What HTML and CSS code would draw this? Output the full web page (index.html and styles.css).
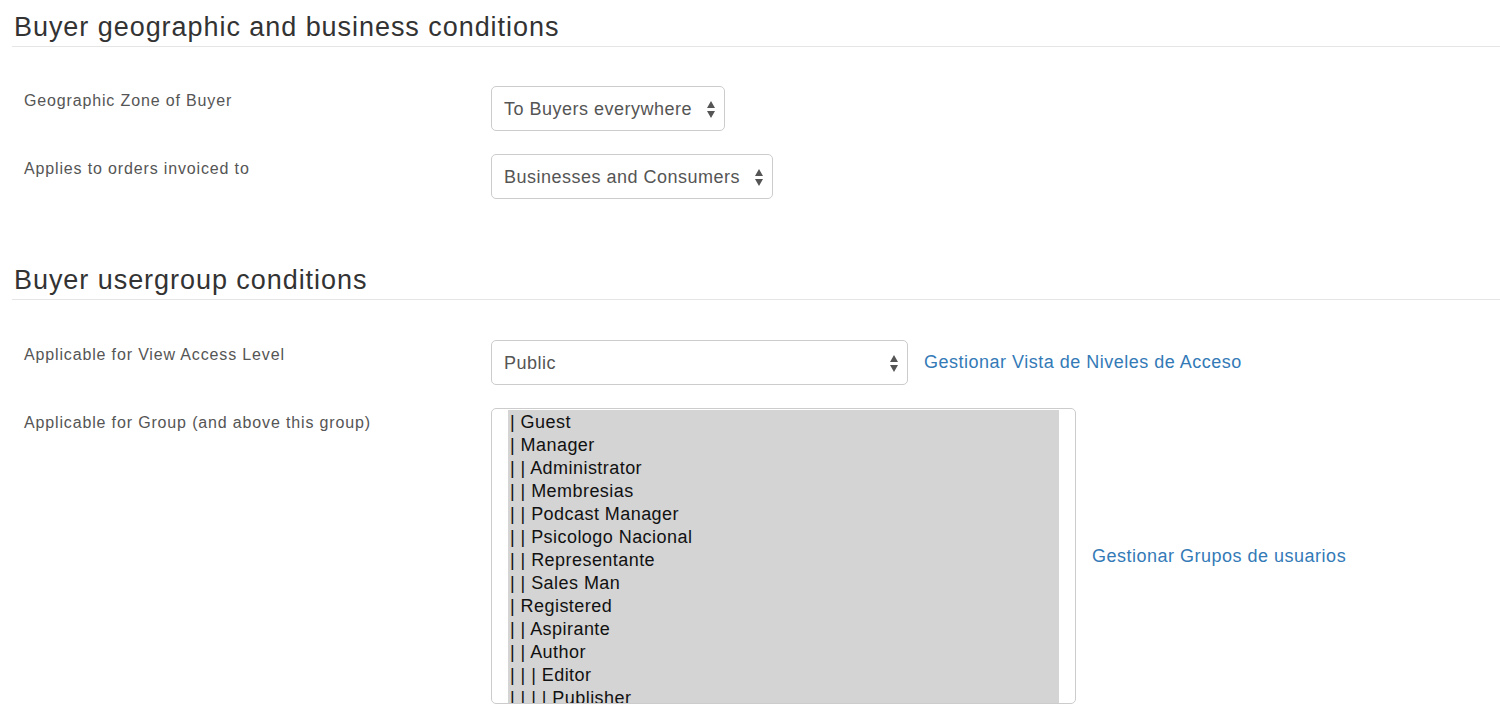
FILE: index.html
```html
<!DOCTYPE html>
<html>
<head>
<meta charset="utf-8">
<link rel="stylesheet" href="styles.css">
</head>
<body>
<div class="page">
  <section class="section">
    <h2 class="section-title">Buyer geographic and business conditions</h2>
    <div class="rows">
      <div class="row">
        <div class="label">Geographic Zone of Buyer</div>
        <div class="control">
          <div class="select w-zone"><span class="select-text">To Buyers everywhere</span>
            <svg class="arrows" width="8" height="17" viewBox="0 0 8 17"><path d="M4 0 L8 7 L0 7 Z M0 10 L8 10 L4 17 Z" fill="#555"/></svg>
          </div>
        </div>
      </div>
      <div class="row">
        <div class="label">Applies to orders invoiced to</div>
        <div class="control">
          <div class="select w-inv"><span class="select-text">Businesses and Consumers</span>
            <svg class="arrows" width="8" height="17" viewBox="0 0 8 17"><path d="M4 0 L8 7 L0 7 Z M0 10 L8 10 L4 17 Z" fill="#555"/></svg>
          </div>
        </div>
      </div>
    </div>
  </section>
  <section class="section second">
    <h2 class="section-title">Buyer usergroup conditions</h2>
    <div class="rows">
      <div class="row">
        <div class="label">Applicable for View Access Level</div>
        <div class="control">
          <div class="select w-access"><span class="select-text">Public</span>
            <svg class="arrows" width="8" height="17" viewBox="0 0 8 17"><path d="M4 0 L8 7 L0 7 Z M0 10 L8 10 L4 17 Z" fill="#555"/></svg>
          </div>
          <a class="link" href="#">Gestionar Vista de Niveles de Acceso</a>
        </div>
      </div>
      <div class="row">
        <div class="label">Applicable for Group (and above this group)</div>
        <div class="control center">
          <div class="multi">
            <div class="options">
              <div class="opt">| Guest</div>
              <div class="opt">| Manager</div>
              <div class="opt">| | Administrator</div>
              <div class="opt">| | Membresias</div>
              <div class="opt">| | Podcast Manager</div>
              <div class="opt">| | Psicologo Nacional</div>
              <div class="opt">| | Representante</div>
              <div class="opt">| | Sales Man</div>
              <div class="opt">| Registered</div>
              <div class="opt">| | Aspirante</div>
              <div class="opt">| | Author</div>
              <div class="opt">| | | Editor</div>
              <div class="opt">| | | | Publisher</div>
            </div>
          </div>
          <a class="link" href="#">Gestionar Grupos de usuarios</a>
        </div>
      </div>
    </div>
  </section>
</div>
</body>
</html>
```

FILE: styles.css
```css
* { box-sizing: border-box; }
html, body { margin: 0; padding: 0; background: #fff; }
body {
  font-family: "Liberation Sans", Arial, Helvetica, sans-serif;
  color: #555;
  width: 1500px;
  height: 715px;
  overflow: hidden;
}
.page { padding: 13px 0 0 12px; }
.section-title {
  margin: 0;
  padding: 0 0 4px 2px;
  font-size: 27px;
  line-height: 29px;
  letter-spacing: 0.95px;
  font-weight: normal;
  color: #333;
  border-bottom: 1px solid #e5e5e5;
}
.second { margin-top: 67px; }
.rows {
  display: flex;
  flex-direction: column;
  gap: 23px;
  padding: 39px 0 0 12px;
}
.second .rows { padding-top: 40px; }
.row {
  display: grid;
  grid-template-columns: 467px 1fr;
  align-items: start;
}
.label {
  font-size: 16px;
  line-height: 20px;
  letter-spacing: 0.85px;
  padding-top: 5px;
  color: #555;
}
.control {
  display: flex;
  align-items: center;
  gap: 16px;
}
.select {
  height: 45px;
  border: 1px solid #ccc;
  border-radius: 5px;
  display: flex;
  align-items: center;
  padding: 1px 9px 0 12px;
  font-size: 18px;
  letter-spacing: 0.5px;
  color: #555;
  background: #fff;
}
.select-text { flex: 1; white-space: nowrap; }
.arrows { flex: none; margin-left: 8px; }
.w-zone { width: 234px; }
.w-inv { width: 282px; }
.w-access { width: 417px; }
.link {
  font-size: 18px;
  letter-spacing: 0.5px;
  color: #337ab7;
  text-decoration: none;
}
.multi {
  width: 585px;
  height: 296px;
  border: 1px solid #ccc;
  border-radius: 5px;
  padding: 1px 16px 0 16px;
  overflow: hidden;
  background: #fff;
}
.options {
  background: #d4d4d4;
  height: 100%;
  padding-top: 1px;
  overflow: hidden;
}
.opt {
  font-size: 18px;
  line-height: 23px;
  height: 23px;
  padding-left: 2px;
  letter-spacing: 0.45px;
  color: #111;
  white-space: nowrap;
}
```
